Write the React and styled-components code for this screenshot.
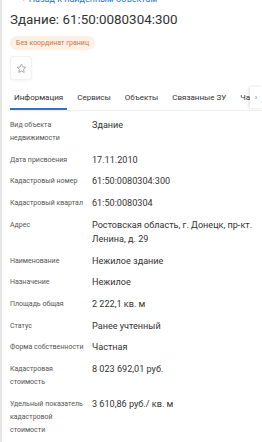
import React from "react";
import styled, { createGlobalStyle } from "styled-components";

const Global = createGlobalStyle`
  html, body { margin: 0; padding: 0; background: #fff; }
  body { font-family: Roboto, "Noto Sans", sans-serif; color: #333; overflow: hidden; }
`;

const Page = styled.div`
  width: 262px;
  height: 442px;
  box-sizing: border-box;
  border-left: 2px solid #e6e6e6;
  padding-left: 8px;
  overflow: hidden;
`;

const BackLink = styled.div`
  display: flex;
  align-items: center;
  gap: 4px;
  height: 10px;
  margin-top: -6px;
  padding-left: 12px;
  font-size: 9px;
  line-height: 10px;
  color: #2f6fd6;
  span:first-child { color: #9aa; }
`;

const Title = styled.h1`
  margin: 8px 0 0;
  font-size: 13.4px;
  line-height: 16px;
  font-weight: 400;
  color: #333;
`;

const Badge = styled.span`
  display: inline-flex;
  align-items: center;
  margin-top: 8px;
  height: 14px;
  padding: 0 6px;
  border-radius: 7px;
  background: #fdf0e5;
  color: #c4774a;
  font-size: 7px;
`;

const StarButton = styled.button`
  display: flex;
  align-items: center;
  justify-content: center;
  margin-top: 6px;
  width: 22px;
  height: 24px;
  padding: 0;
  border: 1px solid #f1f1f1;
  border-radius: 3px;
  background: #fff;
  box-shadow: 0 1px 3px rgba(0,0,0,0.05);
`;

const Tabs = styled.div`
  display: flex;
  align-items: stretch;
  margin-top: 6px;
  height: 24px;
  border-bottom: 1px solid #f0f0f0;
`;

const TabList = styled.div`
  flex: 1;
  min-width: 0;
  display: flex;
  overflow: hidden;
`;

const Tab = styled.div`
  display: flex;
  align-items: center;
  flex-shrink: 0;
  padding: 0 4px;
  margin-right: 6px;
  font-size: 8px;
  white-space: nowrap;
  color: #333;
  border-bottom: 2px solid ${p => (p.$active ? "#2f6fd6" : "transparent")};
`;

const ArrowButton = styled.div`
  flex: 0 0 12px;
  margin: 1px 0 2px;
  background: #fff;
  box-shadow: -1px 0 3px rgba(0,0,0,0.15);
  display: flex;
  align-items: center;
  justify-content: center;
  color: #2f6fd6;
  font-size: 8px;
`;

const Rows = styled.div`
  padding-top: 3px;
`;

const Row = styled.div`
  display: grid;
  grid-template-columns: 82px 1fr;
  padding: 4px 0 3.5px;
`;

const Label = styled.div`
  font-size: 7px;
  line-height: 13px;
  color: #555;
  padding-top: 1px;
  padding-right: 6px;
`;

const Value = styled.div`
  font-size: 9.1px;
  line-height: 14.2px;
  color: #333;
`;

const Star = () => (
  <svg width="11" height="11" viewBox="0 0 24 24" fill="none" stroke="#999" strokeWidth="1.8" strokeLinejoin="round">
    <path d="M12 2.5l2.9 6.1 6.6.8-4.9 4.6 1.3 6.6L12 17.3l-5.9 3.3 1.3-6.6-4.9-4.6 6.6-.8z" />
  </svg>
);

const data = [
  ["Вид объекта недвижимости", "Здание"],
  ["Дата присвоения", "17.11.2010"],
  ["Кадастровый номер", "61:50:0080304:300"],
  ["Кадастровый квартал", "61:50:0080304"],
  ["Адрес", "Ростовская область, г. Донецк, пр\u2011кт. Ленина, д. 29"],
  ["Наименование", "Нежилое здание"],
  ["Назначение", "Нежилое"],
  ["Площадь общая", "2 222,1 кв. м"],
  ["Статус", "Ранее учтенный"],
  ["Форма собственности", "Частная"],
  ["Кадастровая стоимость", "8 023 692,01 руб."],
  ["Удельный показатель кадастровой стоимости", "3 610,86 руб./ кв. м"],
];

const tabs = ["Информация", "Сервисы", "Объекты", "Связанные ЗУ", "Части"];

export default function App() {
  return (
    <Page>
      <Global />
      <BackLink>
        <span>‹</span>
        <span>Назад к найденным объектам</span>
      </BackLink>
      <Title>Здание: 61:50:0080304:300</Title>
      <Badge>Без координат границ</Badge>
      <StarButton aria-label="Избранное"><Star /></StarButton>
      <Tabs>
        <TabList>
          {tabs.map((t, i) => (
            <Tab key={t} $active={i === 0}>{t}</Tab>
          ))}
        </TabList>
        <ArrowButton>›</ArrowButton>
      </Tabs>
      <Rows>
        {data.map(([l, v]) => (
          <Row key={l}>
            <Label>{l}</Label>
            <Value>{v}</Value>
          </Row>
        ))}
      </Rows>
    </Page>
  );
}
